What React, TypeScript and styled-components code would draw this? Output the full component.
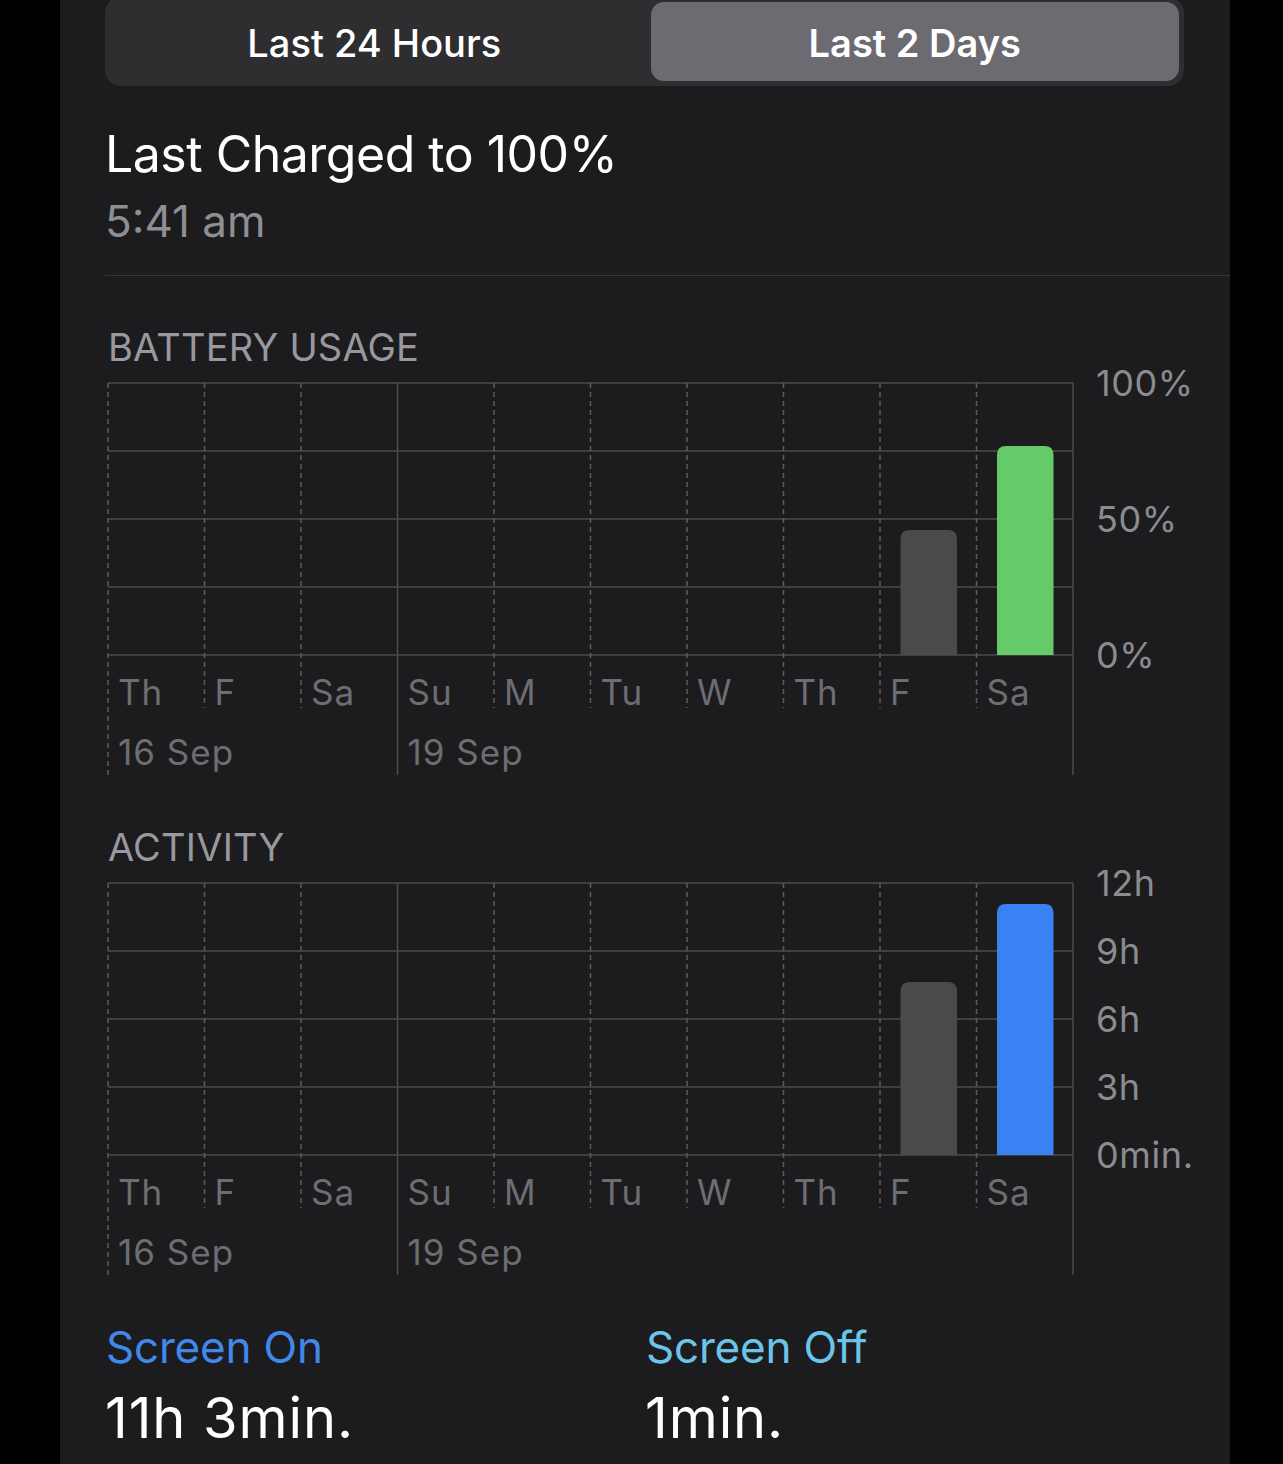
import React from "react";
import styled, { createGlobalStyle } from "styled-components";

const Global = createGlobalStyle`
  html, body { margin: 0; padding: 0; background: #000; }
  body { font-family: Inter, "Noto Sans", sans-serif; -webkit-font-smoothing: antialiased; }
  #root { min-height: 100vh; }
`;

const Panel = styled.div`
  margin-left: 60px;
  width: 1170px;
  min-height: 1464px;
  box-sizing: border-box;
  padding-left: 45px;
  background: #1c1c1e;
  display: flex;
  flex-direction: column;
  overflow: hidden;
`;

const Segmented = styled.div`
  margin-top: -3px;
  width: 1079px;
  height: 89px;
  box-sizing: border-box;
  padding: 5px;
  border-radius: 16px;
  background: #2e2e31;
  display: grid;
  grid-template-columns: 1fr 1fr;
  column-gap: 12px;
`;

const Segment = styled.div<{ $active?: boolean }>`
  display: flex;
  align-items: center;
  justify-content: center;
  border-radius: 13px;
  background: ${(p) => (p.$active ? "#6c6b71" : "transparent")};
  color: #fff;
  font-size: 38px;
  font-weight: ${(p) => (p.$active ? 600 : 500)};
  padding-top: 2px;
`;

const Title = styled.div`
  margin-top: 43px;
  font-size: 50px;
  line-height: 50px;
  color: #fff;
  font-weight: 400;
  letter-spacing: -0.5px;
`;

const Subtle = styled.div`
  margin-top: 20px;
  font-size: 44px;
  line-height: 44px;
  color: #8e8e93;
`;

const Divider = styled.div`
  margin-top: 32px;
  height: 1px;
  background: #38383a;
`;

const SectionLabel = styled.div<{ $gap: number }>`
  margin-top: ${(p) => p.$gap}px;
  padding-left: 3px;
  font-size: 38px;
  line-height: 38px;
  color: #98989e;
  letter-spacing: 0.2px;
`;

const ChartSvg = styled.svg`
  display: block;
  margin-top: -1px;
  overflow: visible;
  font-family: Inter, "Noto Sans", sans-serif;
`;

const Stats = styled.div`
  margin-top: 47px;
  display: grid;
  grid-template-columns: 540px 1fr;
`;

const Stat = styled.div`
  display: flex;
  flex-direction: column;
`;

const StatLabel = styled.div<{ $color: string }>`
  font-size: 44px;
  line-height: 44px;
  color: ${(p) => p.$color};
  padding-left: 1px;
  letter-spacing: -0.2px;
`;

const StatValue = styled.div`
  margin-top: 21px;
  font-size: 56px;
  line-height: 56px;
  color: #fff;
  letter-spacing: 0.9px;
`;

const GRID = "#4b4b4e";
const DASH = "#5c5c60";
const X0 = 3;
const STEP = 96.5;
const TOP = 18;
const ROW = 68;
const BOTTOM = TOP + ROW * 4;
const AXIS_TEXT = "#6d6d72";

const days = ["Th", "F", "Sa", "Su", "M", "Tu", "W", "Th", "F", "Sa"];

type Bar = { col: number; height: number; color: string };

function barPath(x: number, w: number, h: number, r: number) {
  const y = BOTTOM - h;
  return `M${x} ${BOTTOM} L${x} ${y + r} Q${x} ${y} ${x + r} ${y} L${x + w - r} ${y} Q${x + w} ${y} ${x + w} ${y + r} L${x + w} ${BOTTOM} Z`;
}

function Chart({ yLabels, bars }: { yLabels: { text: string; row: number }[]; bars: Bar[] }) {
  const lines = Array.from({ length: 11 }, (_, i) => X0 + i * STEP);
  return (
    <ChartSvg width={1125} height={413} viewBox="0 0 1125 413">
      {[0, 1, 2, 3, 4].map((r) => (
        <line key={r} x1={X0} x2={X0 + 10 * STEP} y1={TOP + r * ROW} y2={TOP + r * ROW} stroke={GRID} strokeWidth={1.4} />
      ))}
      {lines.map((x, i) => {
        const solid = i === 3 || i === 10;
        const long = i === 0 || i === 3 || i === 10;
        return (
          <line
            key={i}
            x1={x}
            x2={x}
            y1={TOP}
            y2={long ? 410 : 343}
            stroke={solid ? GRID : DASH}
            strokeWidth={1.5}
            strokeDasharray={solid ? undefined : "5 4"}
          />
        );
      })}
      {bars.map((b, i) => (
        <path key={i} d={barPath(X0 + b.col * STEP + 20.5, 56.5, b.height, 9)} fill={b.color} />
      ))}
      {days.map((d, i) => (
        <text key={i} x={X0 + i * STEP + 10} y={340} fontSize={35} letterSpacing={1} fill={AXIS_TEXT}>
          {d}
        </text>
      ))}
      <text x={X0 + 10} y={400} fontSize={35} letterSpacing={1} fill={AXIS_TEXT}>16 Sep</text>
      <text x={X0 + 3 * STEP + 10} y={400} fontSize={35} letterSpacing={1} fill={AXIS_TEXT}>19 Sep</text>
      {yLabels.map((l) => (
        <text key={l.text} x={991} y={TOP + l.row * ROW + 12.5} fontSize={36} letterSpacing={0.6} fill="#8b8b90">
          {l.text}
        </text>
      ))}
    </ChartSvg>
  );
}

export default function App() {
  return (
    <>
      <Global />
      <Panel>
        <Segmented>
          <Segment>Last 24 Hours</Segment>
          <Segment $active>Last 2 Days</Segment>
        </Segmented>
        <Title>Last Charged to 100%</Title>
        <Subtle>5:41 am</Subtle>
        <Divider />
        <SectionLabel $gap={52}>BATTERY USAGE</SectionLabel>
        <Chart
          yLabels={[
            { text: "100%", row: 0 },
            { text: "50%", row: 2 },
            { text: "0%", row: 4 },
          ]}
          bars={[
            { col: 8, height: 125, color: "#4a4a4c" },
            { col: 9, height: 209, color: "#65cb68" },
          ]}
        />
        <SectionLabel $gap={50}>ACTIVITY</SectionLabel>
        <Chart
          yLabels={[
            { text: "12h", row: 0 },
            { text: "9h", row: 1 },
            { text: "6h", row: 2 },
            { text: "3h", row: 3 },
            { text: "0min.", row: 4 },
          ]}
          bars={[
            { col: 8, height: 173, color: "#4a4a4c" },
            { col: 9, height: 251, color: "#3a81f3" },
          ]}
        />
        <Stats>
          <Stat>
            <StatLabel $color="#4088ea">Screen On</StatLabel>
            <StatValue>11h 3min.</StatValue>
          </Stat>
          <Stat>
            <StatLabel $color="#6cc4e8">Screen Off</StatLabel>
            <StatValue>1min.</StatValue>
          </Stat>
        </Stats>
      </Panel>
    </>
  );
}
